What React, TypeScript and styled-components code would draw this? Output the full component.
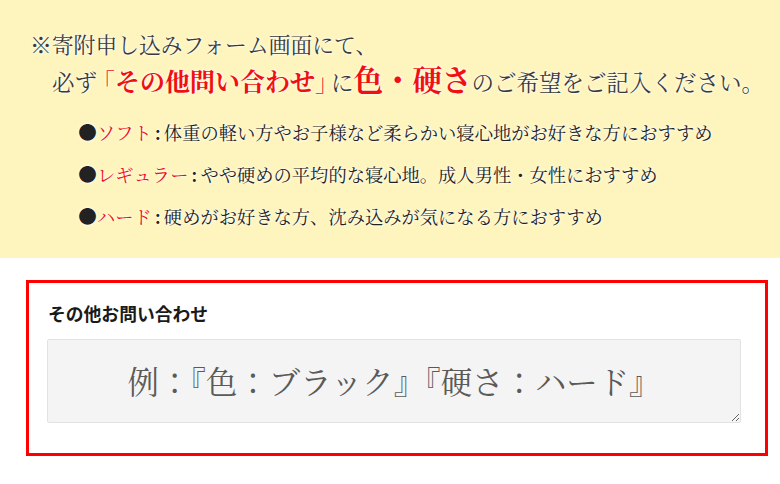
import React from "react";
import styled, { createGlobalStyle } from "styled-components";

const Global = createGlobalStyle`
  html, body { margin: 0; padding: 0; background: #ffffff; }
  body { font-family: "Noto Serif CJK JP", "Noto Sans CJK JP", sans-serif; }
`;

const Banner = styled.section`
  height: 258px;
  box-sizing: border-box;
  background: #fef5be;
  padding-top: 30px;
  font-family: "Noto Serif CJK JP", "Noto Sans CJK JP", serif;
  text-shadow: 0 0 3px #ffffff, 0 0 2px #ffffff;
`;

const Note = styled.p`
  margin: 0 0 0 30px;
  font-size: 21.8px;
  line-height: 28px;
  color: #3a3a3a;
  white-space: nowrap;
`;

const Request = styled.p`
  margin: 2px 0 0 52px;
  font-size: 22.5px;
  line-height: 36px;
  color: #3a3a3a;
  white-space: nowrap;
`;

const Accent = styled.span<{ $size?: number }>`
  color: #f01010;
  font-weight: 700;
  font-size: ${(p) => p.$size ?? 25}px;
`;

const Bracket = styled.span<{ $side: "open" | "close" }>`
  color: #f01010;
  font-size: 24px;
  font-feature-settings: "halt" 1;
  padding-left: ${(p) => (p.$side === "open" ? "6px" : "0")};
  padding-right: ${(p) => (p.$side === "close" ? "4px" : "0")};
`;

const Options = styled.ul`
  list-style: none;
  margin: 12px 0 0 78px;
  padding: 0;
`;

const Option = styled.li`
  font-size: 18.3px;
  line-height: 42px;
  color: #222222;
  white-space: nowrap;
`;

const Dot = styled.span`
  color: #222222;
  font-size: 19px;
`;

const OptionName = styled.span`
  color: #f01010;
`;

const Colon = styled.span`
  display: inline-block;
  width: 12px;
  text-align: center;
  font-weight: 700;
`;

const FormArea = styled.section`
  padding: 22px 12px 28px 26px;
`;

const FieldBox = styled.div`
  width: 742px;
  height: 176px;
  box-sizing: border-box;
  border: 3px solid #ff0000;
  padding: 19px 18px 0 18px;
  display: flex;
  flex-direction: column;
`;

const Label = styled.label`
  font-family: "Noto Sans CJK JP", sans-serif;
  font-weight: 700;
  font-size: 17.8px;
  line-height: 22px;
  color: #1a1a1a;
  padding-left: 1px;
`;

const TextBox = styled.textarea`
  margin-top: 15px;
  width: 694px;
  height: 84px;
  box-sizing: border-box;
  background: #f4f4f4;
  border: 1px solid #e2e2e2;
  border-radius: 2px;
  padding: 19px 10px;
  font-family: "Noto Serif CJK JP", "Noto Sans CJK JP", serif;
  font-size: 31.4px;
  line-height: 44px;
  text-align: center;
  color: #333;
  outline: none;
  &::placeholder {
    color: #5a5a5a;
    opacity: 1;
  }
`;

export default function App() {
  return (
    <>
      <Global />
      <Banner>
        <Note>※寄附申し込みフォーム画面にて、</Note>
        <Request>
          必ず<Bracket $side="open">「</Bracket>
          <Accent>その他問い合わせ</Accent>
          <Bracket $side="close">」</Bracket>に<Accent $size={29.5}>色・硬さ</Accent>
          のご希望をご記入ください。
        </Request>
        <Options>
          <Option>
            <Dot>●</Dot>
            <OptionName>ソフト</OptionName>
            <Colon>:</Colon>体重の軽い方やお子様など柔らかい寝心地がお好きな方におすすめ
          </Option>
          <Option>
            <Dot>●</Dot>
            <OptionName>レギュラー</OptionName>
            <Colon>:</Colon>やや硬めの平均的な寝心地。成人男性・女性におすすめ
          </Option>
          <Option>
            <Dot>●</Dot>
            <OptionName>ハード</OptionName>
            <Colon>:</Colon>硬めがお好きな方、沈み込みが気になる方におすすめ
          </Option>
        </Options>
      </Banner>
      <FormArea>
        <FieldBox>
          <Label htmlFor="other">その他お問い合わせ</Label>
          <TextBox id="other" placeholder="例：『色：ブラック』『硬さ：ハード』" />
        </FieldBox>
      </FormArea>
    </>
  );
}
